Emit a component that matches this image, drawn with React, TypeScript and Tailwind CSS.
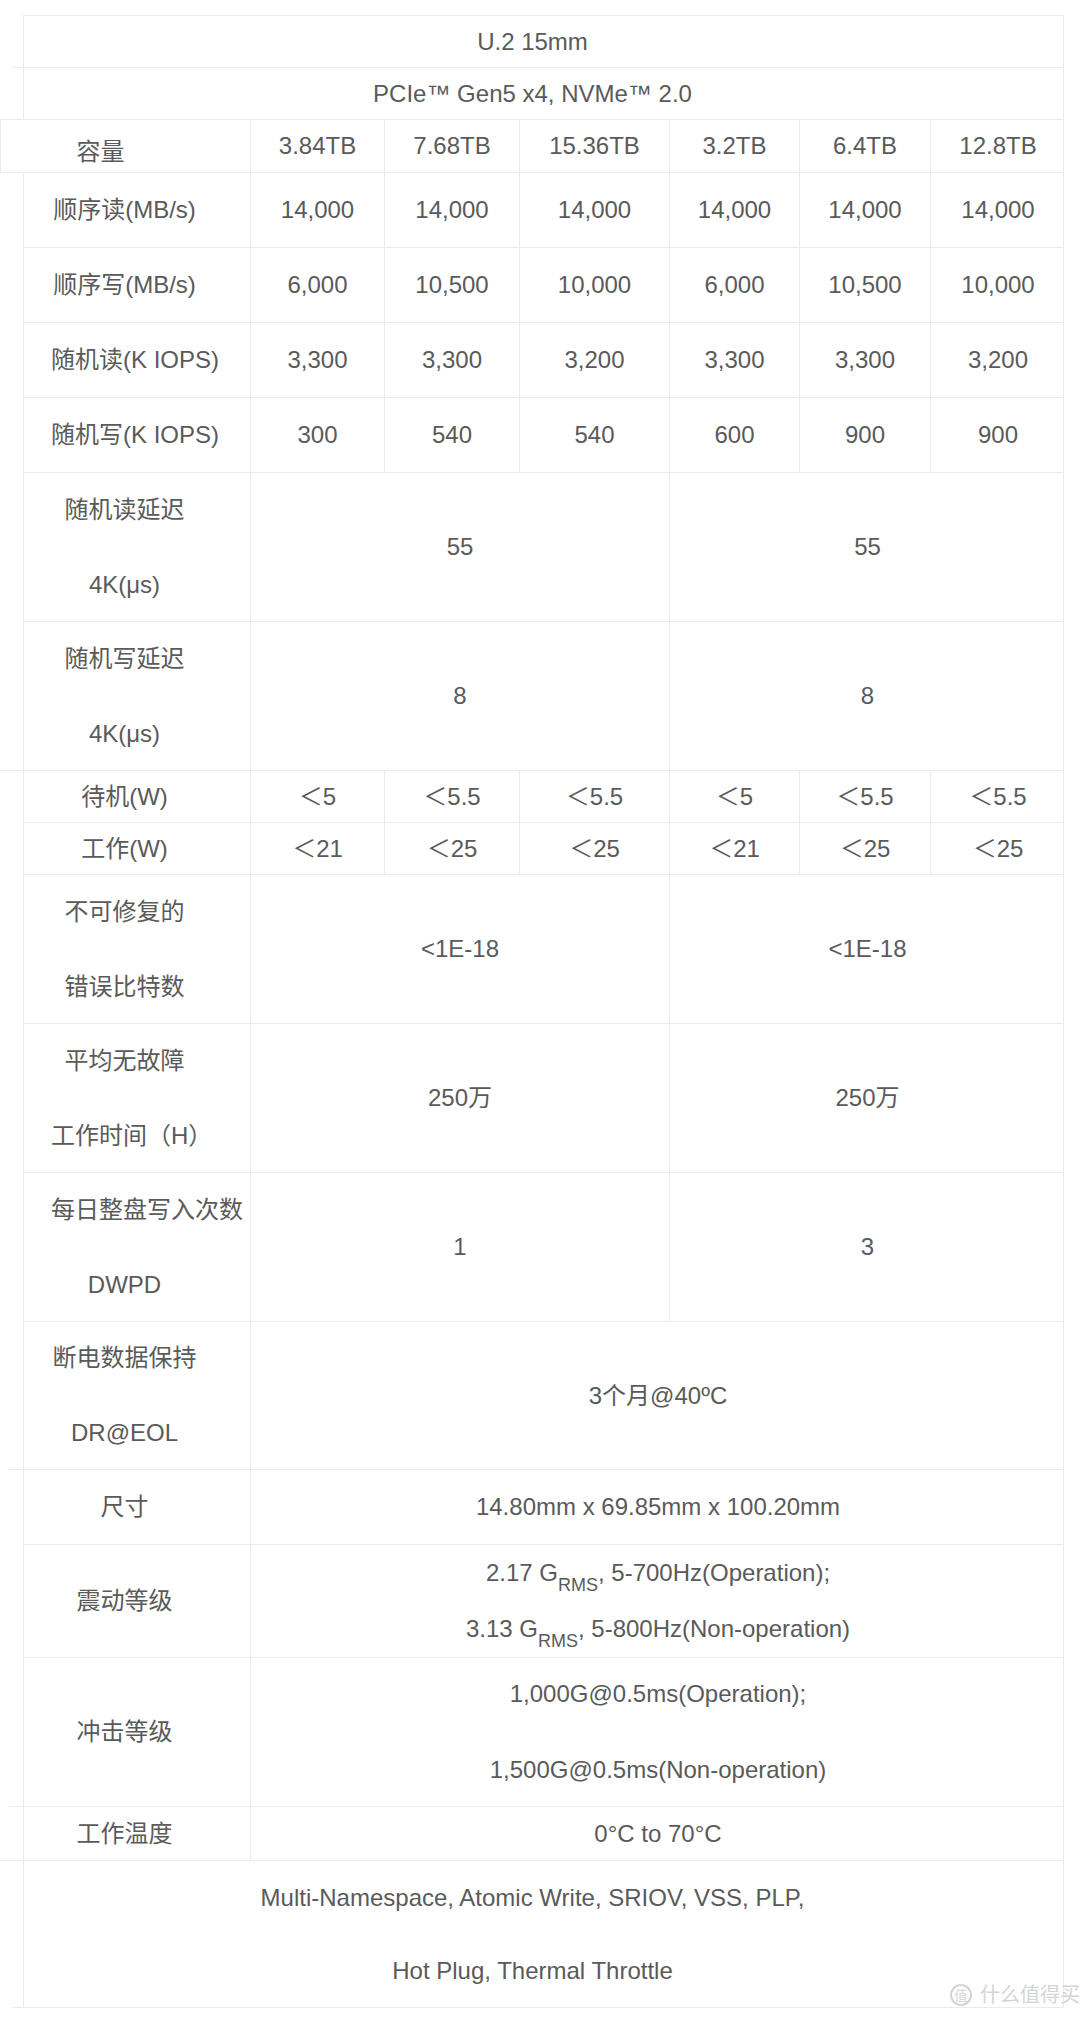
import React from "react";

const LINE = "border-[#ebebeb]";

type Ext = 0 | 11 | 15 | 23;

const extClass: Record<Ext, string> = {
  0: "w-0",
  11: "w-[11px] border-b border-[#ebebeb]",
  15: "w-[15px] border-b border-[#ebebeb]",
  23: "w-[23px] border-b border-[#ebebeb]",
};

function Gutter({ ext = 0 }: { ext?: Ext }) {
  return (
    <div className="w-[23px] shrink-0 flex justify-end">
      <div className={extClass[ext]} />
    </div>
  );
}

function Label({ lines }: { lines: string[] }) {
  return (
    <div
      className={`w-[227px] shrink-0 border-r ${LINE} pl-[27px] pr-[52px] flex flex-col justify-center gap-[39px] whitespace-nowrap text-center`}
    >
      {lines.map((l) => (
        <div key={l} className="leading-[36px]">
          {l}
        </div>
      ))}
    </div>
  );
}

const colW = [
  "w-[134px]",
  "w-[135px]",
  "w-[150px]",
  "w-[130px]",
  "w-[131px]",
  "w-[134px]",
];

function Cells({ values }: { values: string[] }) {
  return (
    <>
      {values.map((v, i) => (
        <div
          key={i}
          className={`${colW[i]} shrink-0 flex items-center justify-center whitespace-nowrap leading-[36px] ${
            i < 5 ? `border-r ${LINE}` : ""
          }`}
        >
          {v}
        </div>
      ))}
    </>
  );
}

function Row({
  h,
  ext = 0,
  top = false,
  children,
}: {
  h: string;
  ext?: Ext;
  top?: boolean;
  children: React.ReactNode;
}) {
  return (
    <div className={`flex ${h}`}>
      <Gutter ext={ext} />
      <div
        className={`w-[1041px] flex border-l border-r border-b ${LINE} ${top ? "border-t" : ""}`}
      >
        {children}
      </div>
    </div>
  );
}

function Simple({ label, values }: { label: string; values: string[] }) {
  return (
    <Row h="h-[75px]">
      <Label lines={[label]} />
      <Cells values={values} />
    </Row>
  );
}

function Split({
  label,
  left,
  right,
  h = "h-[149px]",
  ext = 0,
}: {
  label: string[];
  left: string;
  right: string;
  h?: string;
  ext?: Ext;
}) {
  return (
    <Row h={h} ext={ext}>
      <Label lines={label} />
      <div className={`w-[419px] shrink-0 border-r ${LINE} flex items-center justify-center`}>
        {left}
      </div>
      <div className="w-[395px] shrink-0 flex items-center justify-center">{right}</div>
    </Row>
  );
}

function Wide({
  label,
  lines,
  h,
  gap = "gap-0",
  ext = 0,
}: {
  label: string[];
  lines: React.ReactNode[];
  h: string;
  gap?: string;
  ext?: Ext;
}) {
  return (
    <Row h={h} ext={ext}>
      <Label lines={label} />
      <div className={`w-[814px] shrink-0 flex flex-col items-center justify-center whitespace-nowrap ${gap}`}>
        {lines.map((l, i) => (
          <div key={i} className="leading-[36px]">
            {l}
          </div>
        ))}
      </div>
    </Row>
  );
}

function Rms() {
  return <sub className="text-[18px] align-[-5px] leading-none">RMS</sub>;
}

export default function App() {
  return (
    <div
      className="relative w-[1080px] h-[2019px] overflow-hidden bg-white pt-[15px] text-[24px] text-[#5a5a5a]"
      style={{ fontFamily: '"Liberation Sans", Arial, "Noto Sans CJK SC", sans-serif' }}
    >
      <Row h="h-[53px]" top ext={11}>
        <div className="flex-1 flex items-center justify-center pr-[22px]">U.2 15mm</div>
      </Row>
      <Row h="h-[52px]" ext={23}>
        <div className="flex-1 flex items-center justify-center pr-[22px]">PCIe™ Gen5 x4, NVMe™ 2.0</div>
      </Row>

      {/* capacity row starts at the page edge in the source */}
      <div className="flex h-[53px]">
        <div className={`w-[1064px] flex border-l border-r border-b ${LINE}`}>
          <div className={`w-[250px] shrink-0 border-r ${LINE} pr-[50px] pt-[12px] flex items-center justify-center leading-[36px]`}>
            容量
          </div>
          <Cells values={["3.84TB", "7.68TB", "15.36TB", "3.2TB", "6.4TB", "12.8TB"]} />
        </div>
      </div>

      <Simple label="顺序读(MB/s)" values={["14,000", "14,000", "14,000", "14,000", "14,000", "14,000"]} />
      <Simple label="顺序写(MB/s)" values={["6,000", "10,500", "10,000", "6,000", "10,500", "10,000"]} />
      <Simple label="随机读(K IOPS)" values={["3,300", "3,300", "3,200", "3,300", "3,300", "3,200"]} />
      <Simple label="随机写(K IOPS)" values={["300", "540", "540", "600", "900", "900"]} />

      <Split label={["随机读延迟", "4K(μs)"]} left="55" right="55" />
      <Split label={["随机写延迟", "4K(μs)"]} left="8" right="8" ext={23} />

      <Row h="h-[52px]">
        <Label lines={["待机(W)"]} />
        <Cells values={["＜5", "＜5.5", "＜5.5", "＜5", "＜5.5", "＜5.5"]} />
      </Row>
      <Row h="h-[52px]">
        <Label lines={["工作(W)"]} />
        <Cells values={["＜21", "＜25", "＜25", "＜21", "＜25", "＜25"]} />
      </Row>

      <Split label={["不可修复的", "错误比特数"]} left="<1E-18" right="<1E-18" />
      <Split label={["平均无故障", "工作时间（H）"]} left="250万" right="250万" />
      <Split label={["每日整盘写入次数", "DWPD"]} left="1" right="3" />

      <Wide label={["断电数据保持", "DR@EOL"]} lines={["3个月@40ºC"]} h="h-[148px]" ext={15} />
      <Wide label={["尺寸"]} lines={["14.80mm x 69.85mm x 100.20mm"]} h="h-[75px]" />
      <Wide
        label={["震动等级"]}
        h="h-[113px]"
        gap="gap-[20px]"
        lines={[
          <>
            2.17 G<Rms />, 5-700Hz(Operation);
          </>,
          <>
            3.13 G<Rms />, 5-800Hz(Non-operation)
          </>,
        ]}
      />
      <Wide
        label={["冲击等级"]}
        h="h-[149px]"
        gap="gap-[40px]"
        ext={15}
        lines={["1,000G@0.5ms(Operation);", "1,500G@0.5ms(Non-operation)"]}
      />
      <Wide label={["工作温度"]} lines={["0°C to 70°C"]} h="h-[54px]" ext={23} />

      <Row h="h-[147px]" ext={11}>
        <div className="flex-1 flex flex-col items-center justify-center gap-[37px] pr-[22px]">
          <div className="leading-[36px]">Multi-Namespace, Atomic Write, SRIOV, VSS, PLP,</div>
          <div className="leading-[36px]">Hot Plug, Thermal Throttle</div>
        </div>
      </Row>

      {/* watermark */}
      <div className="absolute left-[950px] top-[1984px] flex items-center gap-[8px] text-[#d4d4d4] whitespace-nowrap">
        <span className="w-[22px] h-[22px] rounded-full border-2 border-[#d4d4d4] flex items-center justify-center text-[13px] leading-none">
          值
        </span>
        <span className="text-[20px] leading-none">什么值得买</span>
      </div>
    </div>
  );
}
